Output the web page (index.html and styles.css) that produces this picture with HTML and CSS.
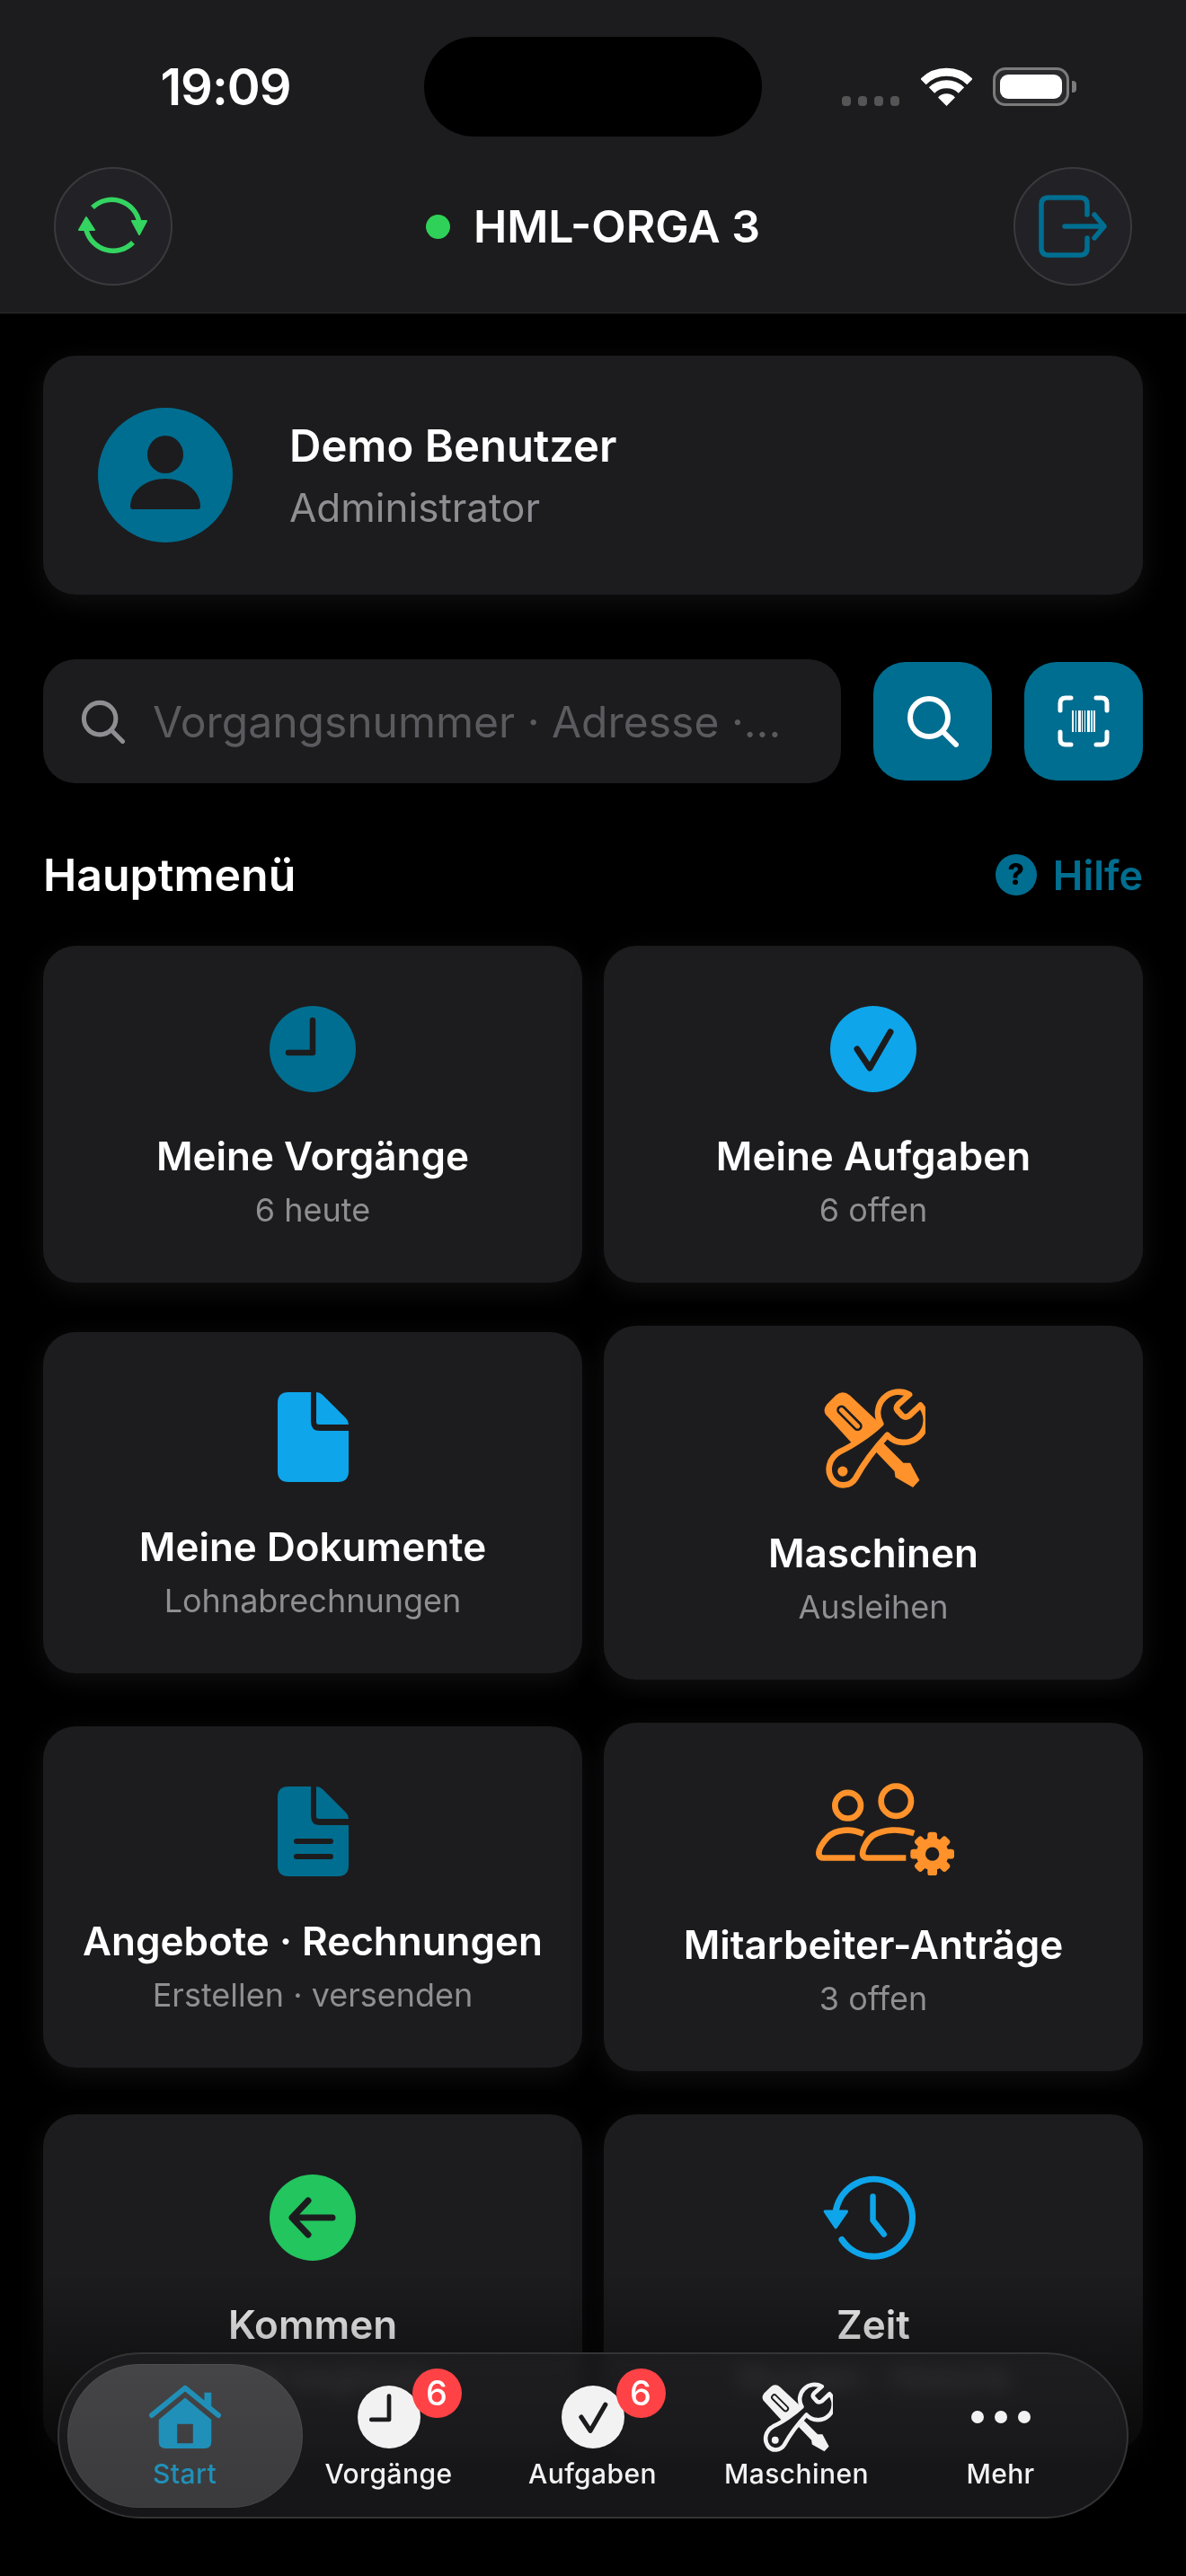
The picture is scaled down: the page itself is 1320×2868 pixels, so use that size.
FILE: index.html
```html
<!DOCTYPE html>
<html lang="de">
<head>
  <meta charset="UTF-8">
  <meta name="viewport" content="width=device-width, initial-scale=1.0">
  <title>HML-ORGA 3</title>
  <link rel="stylesheet" href="styles.css">
</head>
<body>
  <svg class="defs" width="0" height="0">
    <symbol id="tools" viewBox="100 72 345 338">
      <path fill="currentColor" d="M115 125L145 95Q168 75 192 95L290 187L205 262L112 160Q100 145 115 125Z"/>
      <path fill="none" stroke="var(--cut)" stroke-width="32" stroke-linecap="round" d="M164 144L218 198"/>
      <path fill="none" stroke="currentColor" stroke-width="16" stroke-linecap="round" d="M164 144L218 198"/>
      <path fill="currentColor" d="M305 255L372 322L395 322L426 380L404 404L345 370L342 350L280 285Z"/>
      <path fill="var(--cut)" stroke="currentColor" stroke-width="20" stroke-linejoin="round" d="M392 92A71 71 0 0 0 296 190C260 225 200 265 160 283C120 305 112 350 135 380C155 405 195 400 212 372C235 330 265 285 318 228A71 71 0 0 0 429 128L392 163Q378 172 368 163L352 145Q345 135 355 125Z"/>
      <circle fill="currentColor" cx="168" cy="350" r="17"/>
    </symbol>
    <symbol id="clock" viewBox="0 0 96 96">
      <circle cx="48" cy="48" r="48" fill="currentColor"/>
      <path fill="none" stroke="var(--cut)" stroke-width="6.5" stroke-linecap="round" stroke-linejoin="round" d="M48 16V52H21"/>
    </symbol>
    <symbol id="check" viewBox="0 0 96 96">
      <circle cx="48" cy="48" r="48" fill="currentColor"/>
      <path fill="none" stroke="var(--cut)" stroke-width="7" stroke-linecap="round" stroke-linejoin="round" d="M30 48L44 69L67 29"/>
    </symbol>
    <symbol id="doc" viewBox="0 0 79 100">
      <path fill="currentColor" d="M12 0H37V33Q37 43 47 43H79V88Q79 100 67 100H12Q0 100 0 88V12Q0 0 12 0Z"/>
      <path fill="currentColor" d="M43 0Q47 0 50 3L76 29Q79 32 79 36H46Q43 36 43 33Z"/>
    </symbol>
    <symbol id="search" viewBox="0 0 58 58">
      <circle cx="25" cy="25" r="21" fill="none" stroke="currentColor" stroke-width="6"/>
      <path stroke="currentColor" stroke-width="6" stroke-linecap="round" d="M40 40L55 55"/>
    </symbol>
  </svg>

  <div class="page">
    <header class="topbar">
      <div class="status">
        <span class="time">19:09</span>
        <div class="island"></div>
        <div class="status_icons">
          <div class="signal"><i></i><i></i><i></i><i></i></div>
          <svg class="wifi" viewBox="0 0 57 43">
            <g fill="none" stroke="#fff" stroke-width="9">
              <path d="M2.5 16A37 37 0 0 1 54.5 16"/>
              <path d="M12 25.500A23.500 23.500 0 0 1 45 25.500"/>
            </g>
            <path fill="#fff" d="M28.500 43L19 33.500A13 13 0 0 1 38 33.500Z"/>
          </svg>
          <div class="battery"><div class="battery_fill"></div></div>
          <div class="battery_cap"></div>
        </div>
      </div>
      <div class="nav">
        <button class="round_btn" type="button">
          <svg class="sync" viewBox="0 0 80 68">
            <path fill="none" stroke="#34d460" stroke-width="5.500" d="M17 13A31 31 0 0 1 69 30M10 38A31 31 0 0 0 62 52"/>
            <path fill="#34d460" stroke="#34d460" stroke-width="2" stroke-linejoin="round" d="M61 28H77L69 43ZM2 38H19L10 24Z"/>
          </svg>
        </button>
        <div class="server"><span class="server_dot"></span>HML-ORGA 3</div>
        <button class="round_btn" type="button">
          <svg class="logout" viewBox="0 0 76 70">
            <path fill="none" stroke="#006e90" stroke-width="5.500" stroke-linecap="round" stroke-linejoin="round" d="M54 22V11Q54 3 46 3H11Q3 3 3 11V59Q3 67 11 67H46Q54 67 54 59V48M29 35H72M62 22L73 35L62 48"/>
          </svg>
        </button>
      </div>
    </header>

    <main class="content">
      <section class="profile">
        <svg class="avatar" viewBox="0 0 150 150">
          <circle cx="75" cy="75" r="75" fill="#006e90"/>
          <ellipse cx="75" cy="52" rx="20" ry="21" fill="#1c1c1e"/>
          <path fill="#1c1c1e" d="M36 110C36 92 54 79 75 79C96 79 114 92 114 110Q114 113 111 113H39Q36 113 36 110Z"/>
        </svg>
        <div>
          <div class="profile_name">Demo Benutzer</div>
          <div class="profile_role">Administrator</div>
        </div>
      </section>

      <section class="search_row">
        <div class="search_box">
          <svg class="search_icon"><use href="#search"/></svg>
          <span class="search_hint">Vorgangsnummer · Adresse ·...</span>
        </div>
        <button class="square_btn" type="button">
          <svg class="btn_icon"><use href="#search"/></svg>
        </button>
        <button class="square_btn" type="button">
          <svg class="btn_icon" viewBox="0 0 58 58">
            <path fill="none" stroke="#fff" stroke-width="5" stroke-linecap="round" d="M3 17V9Q3 3 9 3H15M43 3H49Q55 3 55 9V17M55 41V49Q55 55 49 55H43M15 55H9Q3 55 3 49V41"/>
            <path fill="#fff" d="M16 17h2v24h-2zM20 17h1v24h-1zM23 17h3v24h-3zM27 17h1v24h-1zM30 17h1v24h-1zM33 17h3v24h-3zM37 17h2v24h-2zM40 17h2v24h-2z"/>
          </svg>
        </button>
      </section>

      <section class="menu_head">
        <h2 class="menu_title">Hauptmenü</h2>
        <div class="help"><span class="help_icon">?</span>Hilfe</div>
      </section>

      <section class="menu">
        <div class="menu_row">
          <a class="card">
            <div class="card_icon"><svg class="ic_round primary"><use href="#clock"/></svg></div>
            <div class="card_title">Meine Vorgänge</div>
            <div class="card_sub">6 heute</div>
          </a>
          <a class="card">
            <div class="card_icon"><svg class="ic_round sky"><use href="#check"/></svg></div>
            <div class="card_title">Meine Aufgaben</div>
            <div class="card_sub">6 offen</div>
          </a>
        </div>
        <div class="menu_row">
          <a class="card">
            <div class="card_icon h100"><svg class="ic_doc sky"><use href="#doc"/></svg></div>
            <div class="card_title">Meine Dokumente</div>
            <div class="card_sub">Lohnabrechnungen</div>
          </a>
          <a class="card">
            <div class="card_icon h114"><svg class="ic_tools orange"><use href="#tools"/></svg></div>
            <div class="card_title">Maschinen</div>
            <div class="card_sub">Ausleihen</div>
          </a>
        </div>
        <div class="menu_row">
          <a class="card">
            <div class="card_icon h100">
              <svg class="ic_doc primary" viewBox="0 0 79 100">
                <use href="#doc"/>
                <path stroke="#1c1c1e" stroke-width="6" stroke-linecap="round" d="M21 61H59M21 78H59"/>
              </svg>
            </div>
            <div class="card_title">Angebote · Rechnungen</div>
            <div class="card_sub">Erstellen · versenden</div>
          </a>
          <a class="card">
            <div class="card_icon h108">
              <svg class="ic_people orange" viewBox="84 75 462 308">
                <g fill="none" stroke="currentColor" stroke-width="20">
                  <circle cx="191" cy="150" r="43"/>
                  <ellipse cx="352" cy="135" rx="50" ry="50"/>
                  <path d="M243 245C200 225 150 230 125 255C105 275 90 300 95 315Q97 325 110 325H215"/>
                  <path d="M412 243C360 225 310 230 275 250C255 265 240 295 240 312Q242 325 258 325H385"/>
                </g>
                <g fill="currentColor">
                  <circle cx="473" cy="312" r="54"/>
                  <rect x="457" y="239" width="32" height="146" rx="10"/>
                  <rect x="457" y="239" width="32" height="146" rx="10" transform="rotate(45 473 312)"/>
                  <rect x="457" y="239" width="32" height="146" rx="10" transform="rotate(90 473 312)"/>
                  <rect x="457" y="239" width="32" height="146" rx="10" transform="rotate(135 473 312)"/>
                </g>
                <circle cx="473" cy="312" r="23" fill="#1c1c1e"/>
              </svg>
            </div>
            <div class="card_title">Mitarbeiter-Anträge</div>
            <div class="card_sub">3 offen</div>
          </a>
        </div>
        <div class="menu_row">
          <a class="card">
            <div class="card_icon">
              <svg class="ic_round green" viewBox="0 0 96 96">
                <circle cx="48" cy="48" r="48" fill="currentColor"/>
                <path fill="none" stroke="#1c1c1e" stroke-width="7" stroke-linecap="round" stroke-linejoin="round" d="M43 29L25 48L43 67M25 48H70"/>
              </svg>
            </div>
            <div class="card_title">Kommen</div>
            <div class="card_sub">Arbeit beginnen</div>
          </a>
          <a class="card">
            <div class="card_icon">
              <svg class="ic_history sky" viewBox="100 60 325 295">
                <path fill="none" stroke="currentColor" stroke-width="22" stroke-linecap="round" d="M168 283A133 133 0 1 0 148 180"/>
                <path fill="currentColor" stroke="currentColor" stroke-width="10" stroke-linejoin="round" d="M110 186H185L147 241Z"/>
                <path fill="none" stroke="currentColor" stroke-width="20" stroke-linecap="round" stroke-linejoin="round" d="M275 135V217L313 265"/>
              </svg>
            </div>
            <div class="card_title">Zeit</div>
            <div class="card_sub">Stunden · Historie</div>
          </a>
        </div>
      </section>
    </main>

    <div class="fade"></div>

    <nav class="tabbar">
      <a class="tab active">
        <div class="tab_icon">
          <svg class="ic_home" viewBox="0 0 82 72">
            <path fill="#2090b8" d="M41 14L71 39V64Q71 72 63 72H19Q11 72 11 64V39ZM32 44V66H50V44Z" fill-rule="evenodd"/>
            <path fill="none" stroke="#2090b8" stroke-width="6" stroke-linecap="round" stroke-linejoin="round" d="M3 34L41 3L79 34"/>
            <path fill="#2090b8" d="M63 8H71V26L63 20Z"/>
          </svg>
        </div>
        <span class="tab_label">Start</span>
      </a>
      <a class="tab">
        <div class="tab_icon">
          <svg class="ic_tab_round"><use href="#clock"/></svg>
          <span class="badge">6</span>
        </div>
        <span class="tab_label">Vorgänge</span>
      </a>
      <a class="tab">
        <div class="tab_icon">
          <svg class="ic_tab_round"><use href="#check"/></svg>
          <span class="badge">6</span>
        </div>
        <span class="tab_label">Aufgaben</span>
      </a>
      <a class="tab">
        <div class="tab_icon"><svg class="ic_tab_tools"><use href="#tools"/></svg></div>
        <span class="tab_label">Maschinen</span>
      </a>
      <a class="tab">
        <div class="tab_icon"><div class="more"><i></i><i></i><i></i></div></div>
        <span class="tab_label">Mehr</span>
      </a>
    </nav>
  </div>
</body>
</html>
```

FILE: styles.css
```css
* {
  box-sizing: border-box;
}
html, body {
  margin: 0;
  background-color: #000;
}
body {
  font-family: Inter, "Noto Sans", sans-serif;
  color: #fff;
  --cut: #1c1c1e;
}
.defs {
  position: absolute;
}
.page {
  position: relative;
  width: 1320px;
  height: 2868px;
  overflow: hidden;
}

/* top */
.topbar {
  height: 349px;
  background-color: #1c1c1e;
  border-bottom: 1px solid #2c2c2e;
}
.status {
  display: grid;
  grid-template-columns: 472px 376px 472px;
  padding-top: 41px;
}
.time {
  align-self: center;
  text-align: center;
  font-size: 56px;
  font-weight: 600;
  letter-spacing: -1px;
  line-height: 60px;
  padding-left: 30px;
}
.island {
  height: 111px;
  background-color: #000;
  border-radius: 56px;
}
.status_icons {
  display: flex;
  align-items: flex-end;
  height: 77px;
  padding-left: 89px;
}
.signal {
  display: flex;
  gap: 8px;
  margin-right: 24px;
}
.signal i {
  width: 10px;
  height: 11px;
  border-radius: 4px;
  background-color: #555;
}
.wifi {
  width: 57px;
  height: 43px;
  margin-right: 23px;
}
.battery {
  width: 85px;
  height: 43px;
  padding: 5px;
  border: 3px solid #7b7b7b;
  border-radius: 14px;
  background-color: #2a2a2c;
}
.battery_fill {
  height: 100%;
  background-color: #fff;
  border-radius: 9px;
}
.battery_cap {
  width: 5px;
  height: 13px;
  margin: 0 0 15px 3px;
  background-color: #7b7b7b;
  border-radius: 0 4px 4px 0;
}
.nav {
  display: flex;
  justify-content: space-between;
  align-items: center;
  padding: 0 60px;
  margin-top: 34px;
}
.round_btn {
  display: flex;
  justify-content: center;
  align-items: center;
  width: 132px;
  height: 132px;
  padding: 0;
  background-color: #222226;
  border: 2px solid #3a3a3e;
  border-radius: 50%;
}
.sync {
  width: 80px;
  height: 68px;
}
.logout {
  width: 76px;
  height: 70px;
}
.server {
  display: flex;
  align-items: center;
  font-size: 50px;
  font-weight: 600;
}
.server_dot {
  width: 27px;
  height: 27px;
  margin-right: 26px;
  background-color: #30d158;
  border-radius: 50%;
}

/* content */
.content {
  padding: 47px 48px 0;
}
.profile {
  display: flex;
  align-items: center;
  gap: 63px;
  height: 266px;
  padding-left: 61px;
  background-color: #1c1c1e;
  border-radius: 36px;
  box-shadow: 0 8px 30px rgba(28, 28, 30, .6);
}
.avatar {
  width: 150px;
  height: 150px;
}
.profile_name {
  font-size: 49px;
  font-weight: 600;
  line-height: 58px;
  margin-bottom: 12px;
  padding-top: 2px;
}
.profile_role {
  font-size: 44px;
  line-height: 54px;
  color: #8e8e93;
}
.search_row {
  display: flex;
  align-items: center;
  gap: 36px;
  margin-top: 72px;
}
.search_box {
  display: flex;
  align-items: center;
  flex: 1;
  height: 138px;
  padding-left: 42px;
  background-color: #1c1c1e;
  border-radius: 36px;
}
.search_icon {
  width: 49px;
  height: 49px;
  color: #8e8e93;
}
.search_hint {
  margin-left: 31px;
  font-size: 48px;
  color: #5a5a5f;
}
.square_btn {
  display: flex;
  justify-content: center;
  align-items: center;
  width: 132px;
  height: 132px;
  padding: 0;
  background-color: #006e90;
  border: 0;
  border-radius: 36px;
  color: #fff;
}
.btn_icon {
  width: 58px;
  height: 58px;
}
.menu_head {
  display: flex;
  justify-content: space-between;
  align-items: center;
  height: 52px;
  margin-top: 76px;
}
.menu_title {
  margin: 0;
  font-size: 50px;
  font-weight: 600;
}
.help {
  display: flex;
  align-items: center;
  gap: 18px;
  font-size: 45px;
  font-weight: 600;
  color: #006e90;
}
.help_icon {
  width: 46px;
  height: 46px;
  background-color: #006e90;
  border-radius: 50%;
  color: #000;
  font-size: 32px;
  font-weight: 800;
  line-height: 46px;
  text-align: center;
}

/* grid */
.menu {
  display: flex;
  flex-direction: column;
  gap: 48px;
  margin-top: 53px;
}
.menu_row {
  display: grid;
  grid-template-columns: 600px 600px;
  gap: 24px;
  align-items: center;
}
.card {
  display: block;
  padding: 67px 0 59px;
  background-color: #1c1c1e;
  border-radius: 36px;
  box-shadow: 0 8px 30px rgba(28, 28, 30, .6);
  text-align: center;
}
.card_icon {
  display: flex;
  justify-content: center;
  align-items: flex-start;
  height: 95px;
  margin-bottom: 44px;
}
.h100 { height: 100px; }
.h108 { height: 108px; }
.h114 { height: 114px; }
.card_title {
  font-size: 44px;
  font-weight: 600;
  line-height: 56px;
}
.card_sub {
  margin-top: 10px;
  font-size: 36px;
  line-height: 44px;
  color: #8e8e93;
}
.primary { color: #006e90; }
.sky { color: #0ea5ea; }
.orange { color: #ff922b; }
.green { color: #22c55e; }
.ic_round {
  width: 96px;
  height: 96px;
}
.ic_doc {
  width: 79px;
  height: 100px;
}
.ic_tools {
  width: 115px;
  height: 112px;
  margin-top: 3px;
}
.ic_people {
  width: 154px;
  height: 103px;
  margin-left: 26px;
}
.ic_history {
  width: 105px;
  height: 96px;
  margin-left: -9px;
}

/* bottom */
.fade {
  position: absolute;
  left: 0;
  right: 0;
  top: 2530px;
  bottom: 0;
  background: linear-gradient(rgba(0, 0, 0, 0), #000 300px);
}
.tabbar {
  position: absolute;
  left: 64px;
  top: 2619px;
  display: flex;
  width: 1192px;
  height: 185px;
  padding: 30px 26px 0;
  background-color: rgba(28, 28, 30, .8);
  border: 2px solid #343436;
  border-radius: 93px;
  backdrop-filter: blur(10px) brightness(2);
}
.tab {
  position: relative;
  display: flex;
  flex-direction: column;
  align-items: center;
  width: 227px;
}
.tab.active::before {
  content: "";
  position: absolute;
  z-index: -1;
  left: -17px;
  top: -19px;
  width: 262px;
  height: 160px;
  background: linear-gradient(#454547, #3a3a3c);
  border-radius: 80px;
  box-shadow: inset 0 0 0 1px rgba(255, 255, 255, .05);
}
.tab_icon {
  position: relative;
  display: flex;
  justify-content: center;
  align-items: center;
  width: 80px;
  height: 80px;
}
.tab_label {
  margin-top: 4px;
  font-size: 30px;
  font-weight: 500;
  letter-spacing: .4px;
  line-height: 38px;
  color: #f2f2f2;
}
.active .tab_label {
  color: #2090b8;
}
.ic_home {
  width: 82px;
  height: 72px;
}
.ic_tab_round {
  width: 70px;
  height: 70px;
  color: #f2f2f2;
}
.ic_tab_tools {
  width: 81px;
  height: 79px;
  color: #f2f2f2;
}
.badge {
  position: absolute;
  left: 66px;
  top: -14px;
  width: 55px;
  height: 55px;
  background-color: #ff4245;
  border-radius: 50%;
  font-size: 38px;
  font-weight: 500;
  line-height: 55px;
  text-align: center;
}
.more {
  display: flex;
  gap: 12px;
}
.more i {
  width: 14px;
  height: 14px;
  background-color: #f2f2f2;
  border-radius: 50%;
}
```
